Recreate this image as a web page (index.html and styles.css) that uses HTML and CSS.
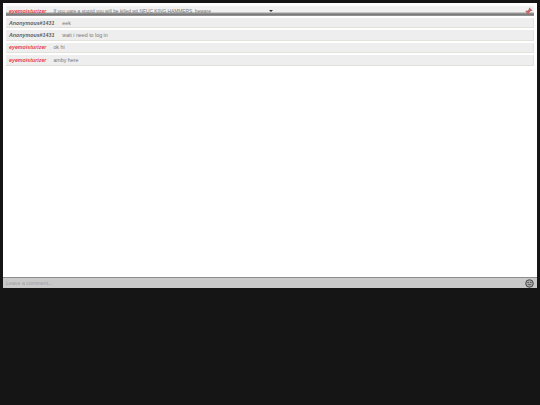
FILE: index.html
```html
<!DOCTYPE html>
<html lang="en">
<head>
<meta charset="utf-8">
<title>Chat</title>
<link rel="stylesheet" href="styles.css">
</head>
<body>
<div class="panel">
  <main class="feed">
    <div class="row pinned">
      <span class="name red">eyemoisturizer</span>
      <span class="msg">If you uare a stupid you will be killed wit NFUC KING HAMMERS. beware</span>
      <span class="caret"></span>
      <svg class="pin" viewBox="0 0 10 10" width="9" height="9"><path d="M6 0.5 9.5 4 8.4 4.7 7.8 4.2 5.8 6.2 6 7.8 5 8.4 1.6 5 2.2 4 3.8 4.2 5.8 2.2 5.3 1.6Z" fill="#c4686b"/><path d="M3 7 0.5 9.5" stroke="#888" stroke-width="1"/></svg>
    </div>
    <div class="row"><span class="name gray">Anonymous#1431</span><span class="msg">eek</span></div>
    <div class="row"><span class="name gray">Anonymous#1431</span><span class="msg">wait i need to log in</span></div>
    <div class="row"><span class="name red">eyemoisturizer</span><span class="msg">ok hi</span></div>
    <div class="row"><span class="name red">eyemoisturizer</span><span class="msg">amby here</span></div>
  </main>
  <footer class="composer">
    <span class="placeholder">Leave a comment...</span>
    <svg class="smile" viewBox="0 0 10 10" width="9" height="9"><circle cx="5" cy="5" r="4.2" fill="#a8a8a8" stroke="#444" stroke-width="1.1"/><circle cx="3.5" cy="3.8" r=".7" fill="#444"/><circle cx="6.5" cy="3.8" r=".7" fill="#444"/><path d="M2.6 5.8Q5 8.2 7.4 5.8Z" fill="#555"/></svg>
  </footer>
</div>
</body>
</html>
```
FILE: styles.css
```css
html, body {
  margin: 0;
  height: 100%;
  background: #151515;
  font-family: "Liberation Sans", Arial, sans-serif;
}
body {
  padding: 3px;
  box-sizing: border-box;
  overflow: hidden;
}
.panel {
  width: 534px;
  height: 285px;
  background: #fff;
  display: flex;
  flex-direction: column;
}
.feed {
  flex: 1;
  padding: 3px 3px 0;
  display: flex;
  flex-direction: column;
  gap: 2px;
}
.row {
  height: 9.4px;
  display: flex;
  align-items: center;
  padding: 0 3px;
  background: #eeeeee;
  border: 0 solid #e2e2da;
  border-width: 0 1px 1px 0;
  font-size: 5.3px;
  color: #777;
  white-space: nowrap;
}
.pinned {
  height: 10px;
  background: linear-gradient(#f1f1f1 0, #f1f1f1 62%, #b8b8b8 66%, #757575 82%, #9a9a9a 100%);
  border-width: 0;
  position: relative;
}
.pinned .msg {
  font-size: 4.85px;
}
.name {
  font-weight: bold;
  font-style: italic;
  margin-right: 7px;
}
.red { color: #e8414c; }
.gray { color: #5f5f5f; margin-right: 8px; }
.msg { color: #777; }
.caret {
  position: absolute;
  left: 263px;
  top: 4px;
  border: 2px solid transparent;
  border-top: 2.4px solid #333;
  border-bottom: 0;
}
.pin {
  margin-left: auto;
  margin-right: -2px;
}
.composer {
  height: 10px;
  background: #c9c9c9;
  border-top: 1px solid #8c8c8c;
  display: flex;
  align-items: center;
  justify-content: space-between;
  padding: 0 3px;
}
.placeholder {
  font-size: 5.3px;
  color: #a0a0a0;
}
```
